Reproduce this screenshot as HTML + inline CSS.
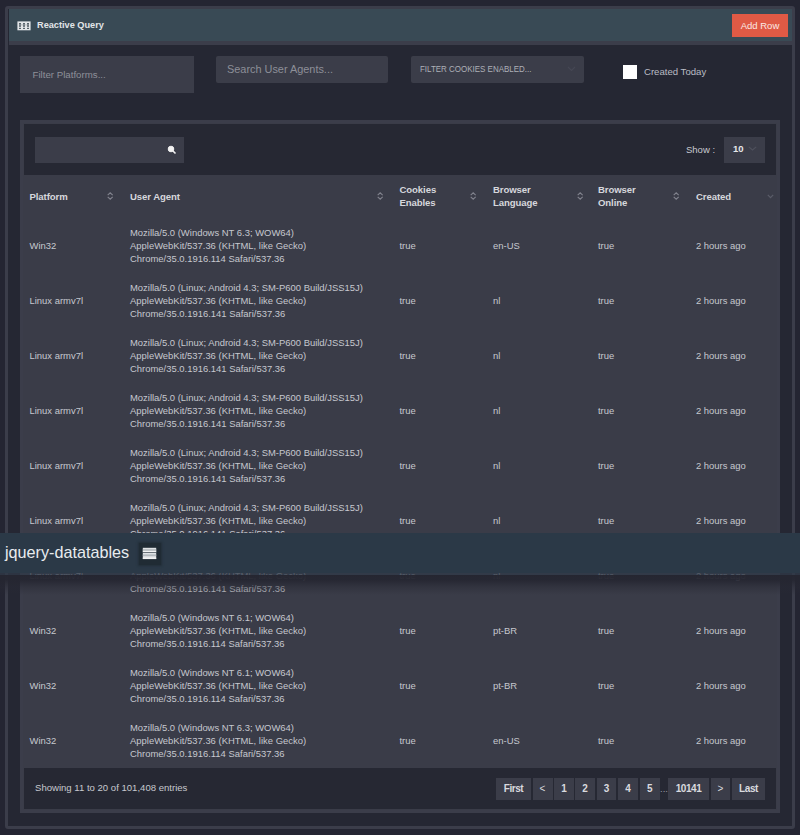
<!DOCTYPE html>
<html><head><meta charset="utf-8">
<style>
*{box-sizing:border-box;margin:0;padding:0}
html,body{width:800px;height:835px;overflow:hidden;background:#242532;font-family:"Liberation Sans",sans-serif;color:#c6c8cf;font-size:9.45px}
.a{position:absolute}
#panel{left:5px;top:6px;width:790px;height:822.5px;border:3.5px solid #3b3d4a;border-top-width:3px;border-radius:3px;background:#252733}
#hdr{left:8.5px;top:9px;width:783px;height:31.5px;background:#394a55}
#hdrline{left:8.5px;top:40.5px;width:783px;height:4.5px;background:#3b3d4a}
#ttl{left:37px;top:20px;font-weight:bold;font-size:9.2px;color:#e2e5e8;white-space:nowrap}
#addrow{left:732px;top:14px;width:56px;height:23px;background:#e05a45;color:#fbe9e4;font-size:9.5px;text-align:center;line-height:23px}
.inp{background:#3b3d49;border-radius:2px}
#in1{left:20px;top:56px;width:173.5px;height:37px;border-radius:0}
#in2{left:216px;top:56px;width:172px;height:26.5px}
#in3{left:411px;top:56px;width:173px;height:26.5px}
#t1{left:32.5px;top:68.75px;font-size:9.7px;color:#8e9099;white-space:nowrap}
#t2{left:227px;top:63px;font-size:10.9px;color:#8d8f98;white-space:nowrap}
#t3{left:419.5px;top:63.6px;font-size:9.3px;color:#aeb0b8;white-space:nowrap;transform:scaleX(0.857);transform-origin:0 0}
#chk{left:623px;top:64.5px;width:13.6px;height:14px;background:#fff}
#t4{left:644px;top:66px;font-size:9.6px;color:#babcc4;white-space:nowrap}
#ipanel{left:20px;top:120px;width:760px;height:692.5px;border:3.5px solid #3b3d4a;background:#3a3c48}
#toolbar{left:24px;top:124px;width:752px;height:50.5px;background:#262833}
#footer{left:24px;top:767.5px;width:752px;height:41.5px;background:#262833}
#sbox{left:35px;top:137px;width:149px;height:25.5px;background:#3b3d49}
#show{left:686px;top:144px;font-size:9.5px;color:#c9cad1;white-space:nowrap}
#selbox{left:724px;top:137px;width:41px;height:25.5px;background:#3b3d49}
#sel10{left:733px;top:143.3px;font-size:9.5px;color:#e6e7ea;font-weight:bold}
.th{font-weight:bold;color:#d6d7dc;line-height:13.25px;font-size:9.6px;letter-spacing:-0.1px;white-space:nowrap}
.td{line-height:13px;white-space:nowrap}
#showing{left:35px;top:782px;font-size:9.57px;white-space:nowrap}
.pg{top:778px;height:21.5px;background:#3b3d49;color:#dfe0e4;font-weight:bold;text-align:center;line-height:22.9px;font-size:10px;letter-spacing:-0.45px;color:#d9dadf}
#banner{left:0;top:532.8px;width:800px;height:40.2px;background:#2b3947}
#bband{left:0;top:573px;width:800px;height:2px;background:rgba(48,58,72,0.75)}
#bshadow{left:0;top:575px;width:800px;height:20px;background:linear-gradient(rgba(37,38,49,1) 0,rgba(37,38,49,0.93) 25%,rgba(40,41,52,0.45) 60%,rgba(58,60,72,0) 100%)}
#bt{left:4.5px;top:542.6px;font-size:16.6px;transform:scaleX(0.975);transform-origin:0 0;color:#e8ecef;white-space:nowrap}
#bicon{left:138.5px;top:542.5px;width:22px;height:22.5px;background:#202b34;box-shadow:0 0 2px 1px #222e38}
</style></head><body>
<div class="a" id="panel"></div>
<div class="a" id="hdr"></div>
<div class="a" id="hdrline"></div>
<svg class="a" style="left:17px;top:21px" width="14" height="10" viewBox="0 0 14 10"><rect x="0.4" y="0.4" width="13.2" height="8.9" fill="#e2e5e8"/><g fill="#56626a"><rect x="2" y="2" width="2" height="3.8"/><rect x="6" y="2" width="2" height="3.8"/><rect x="10" y="2" width="2" height="3.8"/><rect x="2" y="6.8" width="2" height="1.2"/><rect x="6" y="6.8" width="2" height="1.2"/><rect x="10" y="6.8" width="2" height="1.2"/></g><path d="M2 3.9H12" stroke="#a9b0b5" stroke-width="0.8"/></svg>
<div class="a" id="ttl">Reactive Query</div>
<div class="a" id="addrow">Add Row</div>

<div class="a inp" id="in1"></div>
<div class="a inp" id="in2"></div>
<div class="a inp" id="in3"></div>
<div class="a" id="t1">Filter Platforms...</div>
<div class="a" id="t2">Search User Agents...</div>
<div class="a" id="t3">FILTER COOKIES ENABLED...</div>
<svg class="a" style="left:567px;top:66px" width="9" height="6" viewBox="0 0 9 6"><path d="M1 1L4.5 4.5L8 1" fill="none" stroke="#464854" stroke-width="1.1"/></svg>
<div class="a" id="chk"></div>
<div class="a" id="t4">Created Today</div>

<div class="a" id="ipanel"></div>
<div class="a" id="toolbar"></div>
<div class="a" id="footer"></div>
<div class="a" id="sbox"></div>
<svg class="a" style="left:167px;top:145px" width="10" height="10" viewBox="0 0 10 10"><circle cx="4" cy="4" r="2.8" fill="#f2f2f2" stroke="#f2f2f2" stroke-width="1"/><path d="M6 6L8.5 8.5" stroke="#f2f2f2" stroke-width="1.6"/></svg>
<div class="a" id="show">Show :</div>
<div class="a" id="selbox"></div>
<div class="a" id="sel10">10</div>
<svg class="a" style="left:747.5px;top:145.6px" width="9" height="5" viewBox="0 0 9 5"><path d="M0.8 0.8L4.5 4L8.2 0.8" fill="none" stroke="#4f515d" stroke-width="1.1"/></svg>

<div id="tbl">
<div class="a th" style="left:29.5px;top:189.70000000000002px">Platform</div>
<div class="a th" style="left:130px;top:189.70000000000002px">User Agent</div>
<div class="a th" style="left:399.5px;top:182.9px">Cookies<br>Enables</div>
<div class="a th" style="left:493px;top:182.9px">Browser<br>Language</div>
<div class="a th" style="left:598px;top:182.9px">Browser<br>Online</div>
<div class="a th" style="left:696px;top:189.70000000000002px">Created</div>
<svg class="a" style="left:107.3px;top:192.4px" width="6.4" height="8" viewBox="0 0 6.4 8"><path d="M0.7 3.2L3.2 0.8L5.7 3.2M0.7 4.8L3.2 7.2L5.7 4.8" fill="none" stroke="#80828d" stroke-width="1.15"/></svg>
<svg class="a" style="left:376.8px;top:192.4px" width="6.4" height="8" viewBox="0 0 6.4 8"><path d="M0.7 3.2L3.2 0.8L5.7 3.2M0.7 4.8L3.2 7.2L5.7 4.8" fill="none" stroke="#80828d" stroke-width="1.15"/></svg>
<svg class="a" style="left:469.8px;top:192.4px" width="6.4" height="8" viewBox="0 0 6.4 8"><path d="M0.7 3.2L3.2 0.8L5.7 3.2M0.7 4.8L3.2 7.2L5.7 4.8" fill="none" stroke="#80828d" stroke-width="1.15"/></svg>
<svg class="a" style="left:576.8px;top:192.4px" width="6.4" height="8" viewBox="0 0 6.4 8"><path d="M0.7 3.2L3.2 0.8L5.7 3.2M0.7 4.8L3.2 7.2L5.7 4.8" fill="none" stroke="#80828d" stroke-width="1.15"/></svg>
<svg class="a" style="left:673.3px;top:192.4px" width="6.4" height="8" viewBox="0 0 6.4 8"><path d="M0.7 3.2L3.2 0.8L5.7 3.2M0.7 4.8L3.2 7.2L5.7 4.8" fill="none" stroke="#80828d" stroke-width="1.15"/></svg>
<svg class="a" style="left:766.5px;top:194.0px" width="7" height="5" viewBox="0 0 7 5"><path d="M0.8 0.8L3.5 3.6L6.2 0.8" fill="none" stroke="#5a5c68" stroke-width="1.2"/></svg>
<div class="a td" style="left:29.5px;top:238.7px">Win32</div>
<div class="a td" style="left:130px;top:225.7px">Mozilla/5.0 (Windows NT 6.3; WOW64)<br>AppleWebKit/537.36 (KHTML, like Gecko)<br>Chrome/35.0.1916.114 Safari/537.36</div>
<div class="a td" style="left:399.5px;top:238.7px">true</div>
<div class="a td" style="left:493px;top:238.7px">en-US</div>
<div class="a td" style="left:598px;top:238.7px">true</div>
<div class="a td" style="left:696px;top:238.7px">2 hours ago</div>
<div class="a td" style="left:29.5px;top:293.75px">Linux armv7l</div>
<div class="a td" style="left:130px;top:280.75px">Mozilla/5.0 (Linux; Android 4.3; SM-P600 Build/JSS15J)<br>AppleWebKit/537.36 (KHTML, like Gecko)<br>Chrome/35.0.1916.141 Safari/537.36</div>
<div class="a td" style="left:399.5px;top:293.75px">true</div>
<div class="a td" style="left:493px;top:293.75px">nl</div>
<div class="a td" style="left:598px;top:293.75px">true</div>
<div class="a td" style="left:696px;top:293.75px">2 hours ago</div>
<div class="a td" style="left:29.5px;top:348.8px">Linux armv7l</div>
<div class="a td" style="left:130px;top:335.8px">Mozilla/5.0 (Linux; Android 4.3; SM-P600 Build/JSS15J)<br>AppleWebKit/537.36 (KHTML, like Gecko)<br>Chrome/35.0.1916.141 Safari/537.36</div>
<div class="a td" style="left:399.5px;top:348.8px">true</div>
<div class="a td" style="left:493px;top:348.8px">nl</div>
<div class="a td" style="left:598px;top:348.8px">true</div>
<div class="a td" style="left:696px;top:348.8px">2 hours ago</div>
<div class="a td" style="left:29.5px;top:403.85px">Linux armv7l</div>
<div class="a td" style="left:130px;top:390.85px">Mozilla/5.0 (Linux; Android 4.3; SM-P600 Build/JSS15J)<br>AppleWebKit/537.36 (KHTML, like Gecko)<br>Chrome/35.0.1916.141 Safari/537.36</div>
<div class="a td" style="left:399.5px;top:403.85px">true</div>
<div class="a td" style="left:493px;top:403.85px">nl</div>
<div class="a td" style="left:598px;top:403.85px">true</div>
<div class="a td" style="left:696px;top:403.85px">2 hours ago</div>
<div class="a td" style="left:29.5px;top:458.9px">Linux armv7l</div>
<div class="a td" style="left:130px;top:445.9px">Mozilla/5.0 (Linux; Android 4.3; SM-P600 Build/JSS15J)<br>AppleWebKit/537.36 (KHTML, like Gecko)<br>Chrome/35.0.1916.141 Safari/537.36</div>
<div class="a td" style="left:399.5px;top:458.9px">true</div>
<div class="a td" style="left:493px;top:458.9px">nl</div>
<div class="a td" style="left:598px;top:458.9px">true</div>
<div class="a td" style="left:696px;top:458.9px">2 hours ago</div>
<div class="a td" style="left:29.5px;top:513.95px">Linux armv7l</div>
<div class="a td" style="left:130px;top:500.95px">Mozilla/5.0 (Linux; Android 4.3; SM-P600 Build/JSS15J)<br>AppleWebKit/537.36 (KHTML, like Gecko)<br>Chrome/35.0.1916.141 Safari/537.36</div>
<div class="a td" style="left:399.5px;top:513.95px">true</div>
<div class="a td" style="left:493px;top:513.95px">nl</div>
<div class="a td" style="left:598px;top:513.95px">true</div>
<div class="a td" style="left:696px;top:513.95px">2 hours ago</div>
<div class="a td" style="left:29.5px;top:569.0px">Linux armv7l</div>
<div class="a td" style="left:130px;top:556.0px">Mozilla/5.0 (Linux; Android 4.3; SM-P600 Build/JSS15J)<br>AppleWebKit/537.36 (KHTML, like Gecko)<br>Chrome/35.0.1916.141 Safari/537.36</div>
<div class="a td" style="left:399.5px;top:569.0px">true</div>
<div class="a td" style="left:493px;top:569.0px">nl</div>
<div class="a td" style="left:598px;top:569.0px">true</div>
<div class="a td" style="left:696px;top:569.0px">2 hours ago</div>
<div class="a td" style="left:29.5px;top:624.05px">Win32</div>
<div class="a td" style="left:130px;top:611.05px">Mozilla/5.0 (Windows NT 6.1; WOW64)<br>AppleWebKit/537.36 (KHTML, like Gecko)<br>Chrome/35.0.1916.114 Safari/537.36</div>
<div class="a td" style="left:399.5px;top:624.05px">true</div>
<div class="a td" style="left:493px;top:624.05px">pt-BR</div>
<div class="a td" style="left:598px;top:624.05px">true</div>
<div class="a td" style="left:696px;top:624.05px">2 hours ago</div>
<div class="a td" style="left:29.5px;top:679.1px">Win32</div>
<div class="a td" style="left:130px;top:666.1px">Mozilla/5.0 (Windows NT 6.1; WOW64)<br>AppleWebKit/537.36 (KHTML, like Gecko)<br>Chrome/35.0.1916.114 Safari/537.36</div>
<div class="a td" style="left:399.5px;top:679.1px">true</div>
<div class="a td" style="left:493px;top:679.1px">pt-BR</div>
<div class="a td" style="left:598px;top:679.1px">true</div>
<div class="a td" style="left:696px;top:679.1px">2 hours ago</div>
<div class="a td" style="left:29.5px;top:734.15px">Win32</div>
<div class="a td" style="left:130px;top:721.15px">Mozilla/5.0 (Windows NT 6.3; WOW64)<br>AppleWebKit/537.36 (KHTML, like Gecko)<br>Chrome/35.0.1916.114 Safari/537.36</div>
<div class="a td" style="left:399.5px;top:734.15px">true</div>
<div class="a td" style="left:493px;top:734.15px">en-US</div>
<div class="a td" style="left:598px;top:734.15px">true</div>
<div class="a td" style="left:696px;top:734.15px">2 hours ago</div>
</div>

<div class="a" id="showing">Showing 11 to 20 of 101,408 entries</div>
<div class="a pg" style="left:496px;width:35px">First</div>
<div class="a pg" style="left:532.5px;width:20px;font-weight:normal;letter-spacing:0">&lt;</div>
<div class="a pg" style="left:554px;width:19.5px">1</div>
<div class="a pg" style="left:575px;width:19.5px">2</div>
<div class="a pg" style="left:596.5px;width:19.5px">3</div>
<div class="a pg" style="left:618px;width:19.5px">4</div>
<div class="a pg" style="left:639.5px;width:20px">5</div>
<div class="a" style="left:660px;top:783px;color:#9a9ca5;font-size:9.5px">...</div>
<div class="a pg" style="left:668px;width:41px">10141</div>
<div class="a pg" style="left:711px;width:19px;font-weight:normal;letter-spacing:0">&gt;</div>
<div class="a pg" style="left:732px;width:33px">Last</div>

<div class="a" id="banner"></div>
<div class="a" id="bband"></div>
<div class="a" id="bshadow"></div>
<div class="a" id="bt">jquery-datatables</div>
<div class="a" id="bicon"></div>
<svg class="a" style="left:142px;top:547px" width="15" height="13" viewBox="0 0 15 13"><rect x="0.8" y="0.8" width="13.4" height="11.3" fill="#dfe2e5"/><rect x="0.8" y="2.2" width="13.4" height="1.6" fill="#b4b9be"/><rect x="0.8" y="5.4" width="13.4" height="0.6" fill="#1f2a33"/><rect x="0.8" y="7.4" width="13.4" height="1.8" fill="#b4b9be"/><rect x="0.8" y="3.9" width="13.4" height="1" fill="#f4f5f6"/><rect x="0.8" y="10.6" width="13.4" height="1.3" fill="#f4f5f6"/></svg>
</body></html>
